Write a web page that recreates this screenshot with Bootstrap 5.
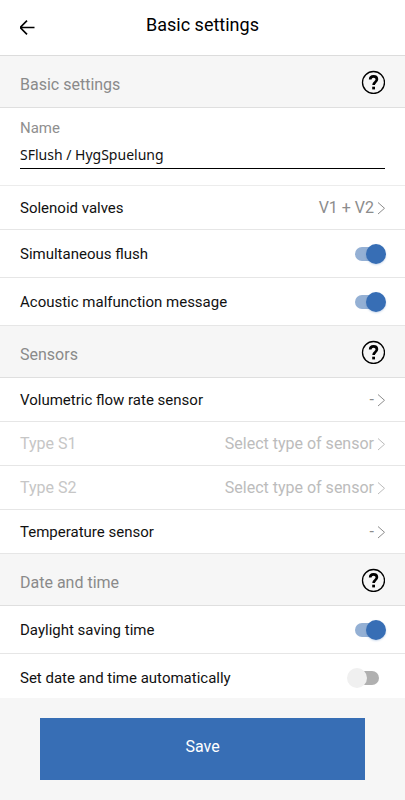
<!DOCTYPE html>
<html lang="en">
<head>
<meta charset="utf-8">
<meta name="viewport" content="width=device-width, initial-scale=1">
<title>Basic settings</title>
<link href="https://cdn.jsdelivr.net/npm/bootstrap@5.3.0/dist/css/bootstrap.min.css" rel="stylesheet">
<style>
body { font-family: Roboto, "Liberation Sans", sans-serif; font-size: 15px; line-height: 20px; color: #111; background: #fff; }
.gutter { padding-left: 20px; padding-right: 20px; }
.app-bar { height: 56px; border-bottom: 1px solid #dcdcdc; }
.app-title { font-size: 18px; line-height: 20px; font-weight: 400; color: #000; padding-bottom: 6px; }
.icon-btn, .icon-btn:hover { line-height: 0; color: #000; }
.line-icon { fill: none; stroke: currentColor; }
.section-bar { height: 52px; background: #f6f6f6; border-bottom: 1px solid #dfdfdf; }
.section-title { font-size: 16px; line-height: 20px; font-weight: 400; color: #8a8a8a; padding-top: 6px; }
.name-field { min-height: 78px; padding-top: 10px; border-bottom: 1px solid #ececec; }
.name-field label { color: #8f8f8f; }
.name-input { font-family: "Noto Sans", sans-serif; font-size: 14px; line-height: 20px; padding: 6px 0 4px; height: 31px; color: #111; border: 0; border-bottom: 1px solid #000; }
.setting { --bs-btn-color: #111; --bs-btn-disabled-color: #c6c6c6; --bs-btn-disabled-opacity: 1; font-size: 15px; line-height: 20px; min-height: 44px; padding-top: 0; padding-bottom: 0; border: 0; border-bottom: 1px solid #e6e6e6; }
.setting:disabled { font-size: 16px; border-color: #e6e6e6; }
.setting-toggle { min-height: 48px; }
.setting-last { padding-top: 3px; border-bottom: 0; }
.setting-value { font-size: 16px; color: #8c8c8c; gap: 2px; }
.setting:disabled .setting-value { color: #bcbcbc; }
.toggle { appearance: none; position: relative; width: 39px; height: 20px; margin: 0 -1px 0 0; }
.toggle::before { content: ""; position: absolute; left: 8px; top: 3px; width: 24px; height: 14px; border-radius: 7px; background: #b0b0b0; }
.toggle::after { content: ""; position: absolute; left: 0; top: 0; width: 20px; height: 20px; border-radius: 50%; background: #f0f0f0; }
.toggle:checked::before { background: #94b0d4; }
.toggle:checked::after { left: 19px; background: #376eb5; box-shadow: 0 1px 2px #376eb544; }
.save-bar { background: #f6f6f6; padding: 20px 40px; }
.save-btn, .save-btn:hover { font-size: 16px; line-height: 20px; height: 62px; background: #376eb5; color: #fff; padding: 0 0 4px; }
</style>
</head>
<body class="min-vh-100 d-flex flex-column">
<svg class="position-absolute" width="0" height="0" aria-hidden="true">
  <symbol id="help" viewBox="0 0 24 24">
    <circle cx="12.5" cy="12.5" r="11" stroke-width="1.3"/>
    <path d="M9.2 9.6C9.2 7.5 10.5 6.4 12.5 6.4s3.4 1.1 3.4 2.9c0 1.5-.8 2.2-1.8 3-1 .7-1.5 1.3-1.5 2.7" stroke-width="2.7"/>
    <path d="M12.6 16.7v2.7" stroke-width="2.8"/>
  </symbol>
  <symbol id="chevron" viewBox="0 0 9 14"><path d="M2 1.5 8.5 7.3 2 13" stroke-width="1"/></symbol>
</svg>

<header class="app-bar gutter d-flex align-items-center">
  <button type="button" class="btn icon-btn border-0 p-0" aria-label="Back">
    <svg class="line-icon" width="16" height="16" viewBox="0 0 16 16" stroke-width="1.7"><path d="M14.5 7.5H.5M7 .7.2 7.5 7 14.3"/></svg>
  </button>
  <h1 class="app-title flex-grow-1 text-center mb-0 pe-3">Basic settings</h1>
</header>

<main class="flex-grow-1">
  <section>
    <div class="section-bar gutter d-flex align-items-center justify-content-between">
      <h2 class="section-title mb-0">Basic settings</h2>
      <button type="button" class="btn icon-btn border-0 p-0" aria-label="Help: Basic settings"><svg class="line-icon" width="24" height="24"><use href="#help"/></svg></button>
    </div>
    <div class="name-field gutter">
      <label class="d-block" for="deviceName">Name</label>
      <input id="deviceName" class="name-input w-100 bg-transparent d-block" type="text" value="SFlush / HygSpuelung">
    </div>
    <button type="button" class="setting gutter btn rounded-0 w-100 d-flex align-items-center justify-content-between"><span>Solenoid valves</span><span class="setting-value d-flex align-items-center">V1 + V2<svg class="line-icon" width="9" height="14"><use href="#chevron"/></svg></span></button>
    <div class="setting setting-toggle gutter d-flex align-items-center justify-content-between">
      <label for="simFlush">Simultaneous flush</label><input id="simFlush" class="toggle" type="checkbox" role="switch" checked>
    </div>
    <div class="setting setting-toggle gutter d-flex align-items-center justify-content-between">
      <label for="acoustic">Acoustic malfunction message</label><input id="acoustic" class="toggle" type="checkbox" role="switch" checked>
    </div>
  </section>

  <section>
    <div class="section-bar gutter d-flex align-items-center justify-content-between">
      <h2 class="section-title mb-0">Sensors</h2>
      <button type="button" class="btn icon-btn border-0 p-0" aria-label="Help: Sensors"><svg class="line-icon" width="24" height="24"><use href="#help"/></svg></button>
    </div>
    <button type="button" class="setting gutter btn rounded-0 w-100 d-flex align-items-center justify-content-between"><span>Volumetric flow rate sensor</span><span class="setting-value d-flex align-items-center">-<svg class="line-icon" width="9" height="14"><use href="#chevron"/></svg></span></button>
    <button type="button" disabled class="setting gutter btn rounded-0 w-100 d-flex align-items-center justify-content-between"><span>Type S1</span><span class="setting-value d-flex align-items-center">Select type of sensor<svg class="line-icon" width="9" height="14"><use href="#chevron"/></svg></span></button>
    <button type="button" disabled class="setting gutter btn rounded-0 w-100 d-flex align-items-center justify-content-between"><span>Type S2</span><span class="setting-value d-flex align-items-center">Select type of sensor<svg class="line-icon" width="9" height="14"><use href="#chevron"/></svg></span></button>
    <button type="button" class="setting gutter btn rounded-0 w-100 d-flex align-items-center justify-content-between"><span>Temperature sensor</span><span class="setting-value d-flex align-items-center">-<svg class="line-icon" width="9" height="14"><use href="#chevron"/></svg></span></button>
  </section>

  <section>
    <div class="section-bar gutter d-flex align-items-center justify-content-between">
      <h2 class="section-title mb-0">Date and time</h2>
      <button type="button" class="btn icon-btn border-0 p-0" aria-label="Help: Date and time"><svg class="line-icon" width="24" height="24"><use href="#help"/></svg></button>
    </div>
    <div class="setting setting-toggle gutter d-flex align-items-center justify-content-between">
      <label for="dst">Daylight saving time</label><input id="dst" class="toggle" type="checkbox" role="switch" checked>
    </div>
    <div class="setting setting-last gutter d-flex align-items-center justify-content-between">
      <label for="autoTime">Set date and time automatically</label><input id="autoTime" class="toggle" type="checkbox" role="switch">
    </div>
  </section>
</main>

<footer class="save-bar"><button type="submit" class="save-btn btn rounded-0 border-0 w-100">Save</button></footer>
</body>
</html>
